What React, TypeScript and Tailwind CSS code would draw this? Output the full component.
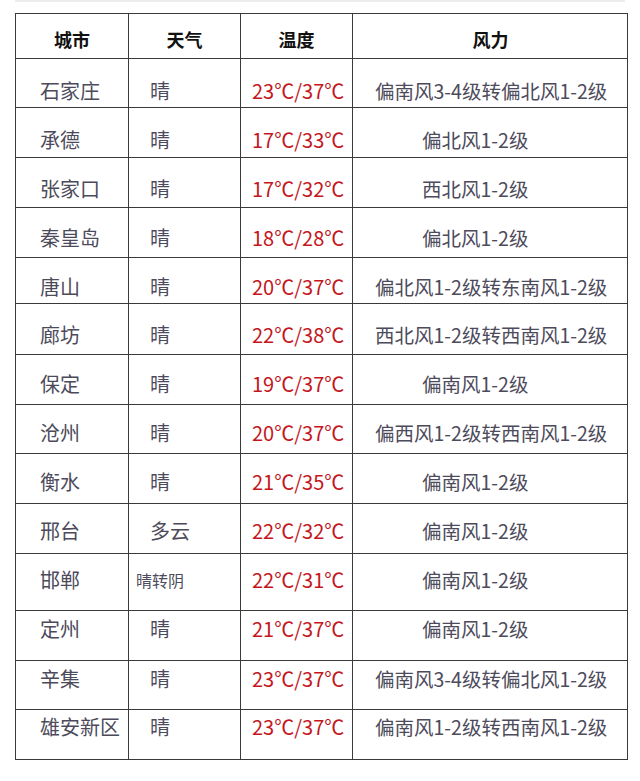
const font = { fontFamily: '"Noto Sans CJK SC", "Noto Sans", sans-serif' };

type Row = {
  city: string;
  weather: string;
  temp: string;
  wind: string;
  h: string;
  pt: string;
};

// row heights and text offsets follow the uneven lines of the source table
const rows: Row[] = [
  { city: "石家庄", weather: "晴", temp: "23℃/37℃", wind: "偏南风3-4级转偏北风1-2级", h: "h-[49px]", pt: "pt-[22px]" },
  { city: "承德", weather: "晴", temp: "17℃/33℃", wind: "偏北风1-2级", h: "h-[50px]", pt: "pt-[22px]" },
  { city: "张家口", weather: "晴", temp: "17℃/32℃", wind: "西北风1-2级", h: "h-[50px]", pt: "pt-[21px]" },
  { city: "秦皇岛", weather: "晴", temp: "18℃/28℃", wind: "偏北风1-2级", h: "h-[50px]", pt: "pt-[20px]" },
  { city: "唐山", weather: "晴", temp: "20℃/37℃", wind: "偏北风1-2级转东南风1-2级", h: "h-[46px]", pt: "pt-[19px]" },
  { city: "廊坊", weather: "晴", temp: "22℃/38℃", wind: "西北风1-2级转西南风1-2级", h: "h-[51px]", pt: "pt-[21px]" },
  { city: "保定", weather: "晴", temp: "19℃/37℃", wind: "偏南风1-2级", h: "h-[50px]", pt: "pt-[19px]" },
  { city: "沧州", weather: "晴", temp: "20℃/37℃", wind: "偏西风1-2级转西南风1-2级", h: "h-[49px]", pt: "pt-[18px]" },
  { city: "衡水", weather: "晴", temp: "21℃/35℃", wind: "偏南风1-2级", h: "h-[50px]", pt: "pt-[18px]" },
  { city: "邢台", weather: "多云", temp: "22℃/32℃", wind: "偏南风1-2级", h: "h-[50px]", pt: "pt-[17px]" },
  { city: "邯郸", weather: "晴转阴", temp: "22℃/31℃", wind: "偏南风1-2级", h: "h-[57px]", pt: "pt-[16px]" },
  { city: "定州", weather: "晴", temp: "21℃/37℃", wind: "偏南风1-2级", h: "h-[50px]", pt: "pt-[8px]" },
  { city: "辛集", weather: "晴", temp: "23℃/37℃", wind: "偏南风3-4级转偏北风1-2级", h: "h-[49px]", pt: "pt-[8px]" },
  { city: "雄安新区", weather: "晴", temp: "23℃/37℃", wind: "偏南风1-2级转西南风1-2级", h: "h-[50px]", pt: "pt-[7px]" },
];

const cols = "grid grid-cols-[112px_112px_112px_276px]";

export default function App() {
  return (
    <div className="w-[640px] h-[781px] bg-white" style={font}>
      {/* cut-off edge of the table above */}
      <div className="mx-[15px] h-[2px] bg-[#ededed]" />

      <div className="ml-[15px] mt-[11px] w-[613px] border border-[#3a3a3a]">
        {/* Header */}
        <div className={`${cols} h-[44px] text-[18px] leading-[18px] font-bold text-[#111]`}>
          <div className="pt-[16px] text-center">城市</div>
          <div className="pt-[16px] text-center border-l border-[#3a3a3a]">天气</div>
          <div className="pt-[16px] text-center border-l border-[#3a3a3a]">温度</div>
          <div className="pt-[16px] text-center border-l border-[#3a3a3a]">风力</div>
        </div>

        {rows.map((r) => {
          const long = r.wind.length > 8;
          return (
            <div
              key={r.city}
              className={`${cols} ${r.h} border-t border-[#3a3a3a] text-[20px] leading-[20px] text-[#4d4b5b] whitespace-nowrap`}
            >
              <div className={`${r.pt} pl-[24px]`}>{r.city}</div>
              <div className={`${r.pt} border-l border-[#3a3a3a]`}>
                {r.weather === "晴转阴" ? (
                  <span className="block pl-[7px] pt-[2px] text-[16px] leading-[16px]">{r.weather}</span>
                ) : (
                  <span className="block pl-[21px]">{r.weather}</span>
                )}
              </div>
              <div className={`${r.pt} pl-[11px] border-l border-[#3a3a3a] text-[#c4161c]`}>{r.temp}</div>
              <div
                className={`${r.pt} ${long ? "pl-[22px]" : "pl-[69px]"} border-l border-[#3a3a3a] text-[19.5px]`}
              >
                {r.wind}
              </div>
            </div>
          );
        })}
      </div>
    </div>
  );
}
